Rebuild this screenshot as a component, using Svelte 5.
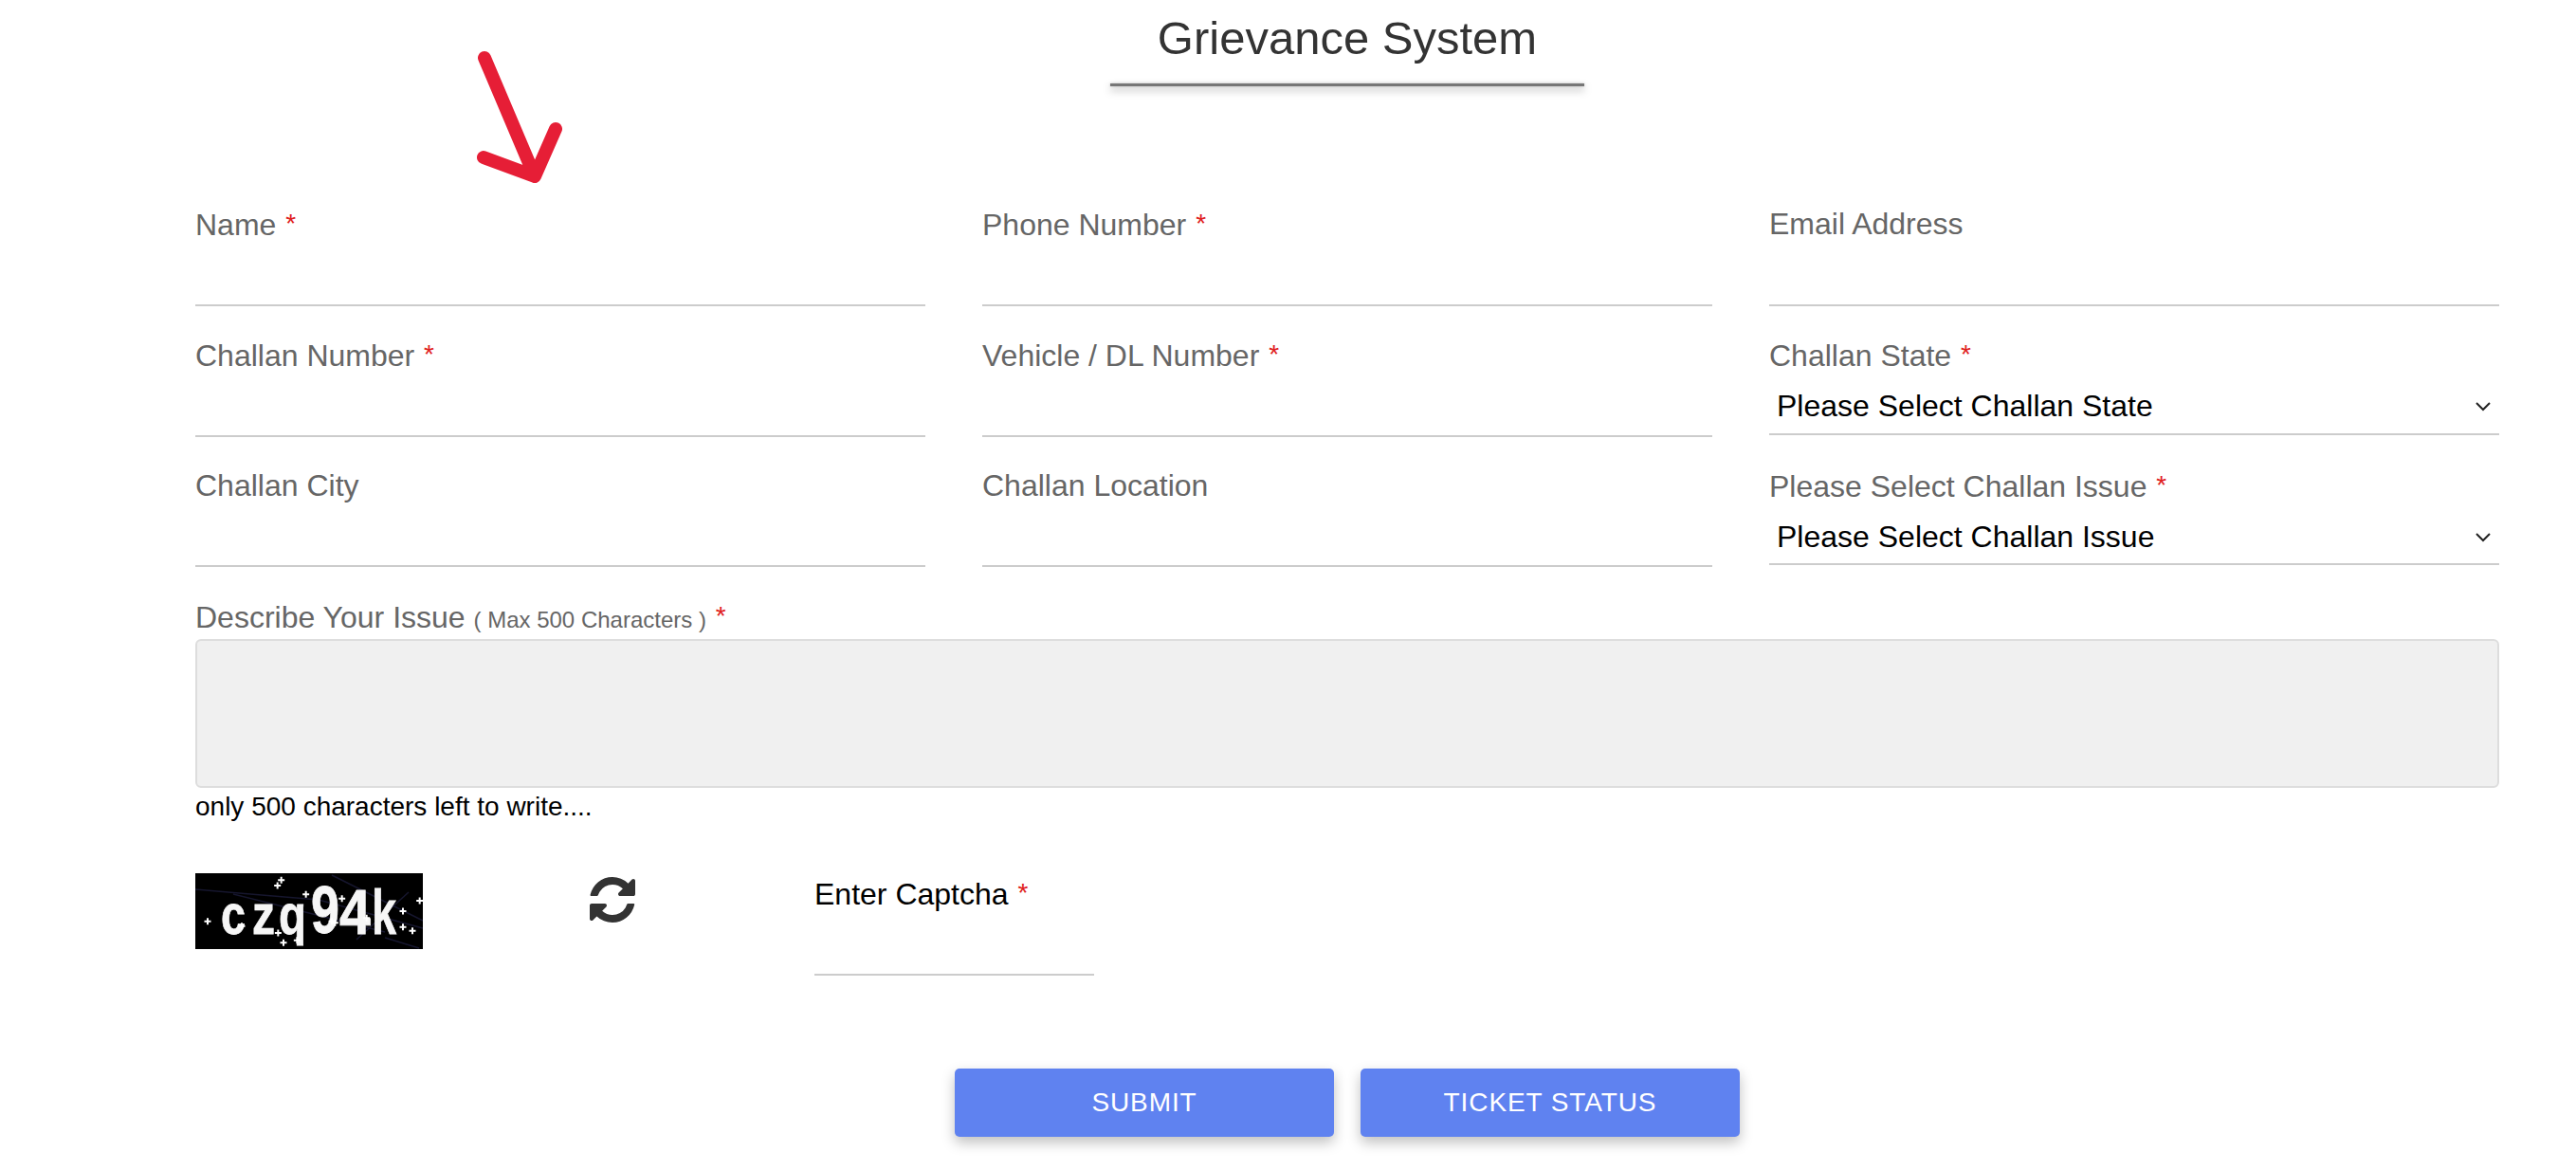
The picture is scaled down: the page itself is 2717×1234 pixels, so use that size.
<script>
  const rows = [
    [{ label: 'Name', req: true }, { label: 'Phone Number', req: true }, { label: 'Email Address', req: false }],
    [{ label: 'Challan Number', req: true }, { label: 'Vehicle / DL Number', req: true }, { label: 'Challan State', req: true, select: 'Please Select Challan State' }],
    [{ label: 'Challan City', req: false }, { label: 'Challan Location', req: false }, { label: 'Please Select Challan Issue', req: true, select: 'Please Select Challan Issue' }]
  ];
  const fields = rows.flat();
  const stars = [[350,85],[338,102],[428,130],[542,143],[788,150],[735,183],[117,215],[520,220],[620,205],[225,230],[340,252],[400,275],[357,283],[735,233],[765,245],[510,215]]
    .map(([x, y]) => [x / 3 - 26, y / 3 - 21]);
  const glyphs = [
    { c: 'c', x: 27, y: 64, s: 60, w: 26 },
    { c: 'z', x: 60, y: 64, s: 60, w: 24 },
    { c: 'q', x: 88, y: 64, s: 60, w: 29 },
    { c: '9', x: 122, y: 63, s: 70, w: 30 },
    { c: '4', x: 152, y: 64, s: 66, w: 33 },
    { c: 'k', x: 186, y: 64, s: 66, w: 26 }
  ];
</script>

<div class="page">
  <svg class="arrow" width="100" height="150" viewBox="0 0 100 150" aria-hidden="true">
    <path d="M12 8 L65 133 M11 113 L65 133 L87 83" fill="none" stroke="#e61e36" stroke-width="14" stroke-linecap="round" stroke-linejoin="round" />
  </svg>

  <header class="head">
    <h1>Grievance System</h1>
    <div class="rule"></div>
  </header>

  <form class="form" onsubmit={(e) => e.preventDefault()}>
    <div class="grid">
      {#each fields as f}
        <div class="field">
          <label class="lbl">{f.label}{#if f.req}&nbsp;<span class="req">*</span>{/if}</label>
          {#if f.select}
            <div class="selwrap">
              <select class="sel"><option>{f.select}</option></select>
              <svg class="chev" width="16" height="10" viewBox="0 0 16 10" aria-hidden="true">
                <path d="M1 1 L8 8 L15 1" fill="none" stroke="#222" stroke-width="2" />
              </svg>
            </div>
          {:else}
            <input class="inp" type="text" />
          {/if}
        </div>
      {/each}
    </div>

    <div class="issue">
      <label class="lbl">Describe Your Issue <small>( Max 500 Characters )</small>&nbsp;<span class="req">*</span></label>
      <textarea class="area"></textarea>
      <p class="left">only 500 characters left to write....</p>
    </div>

    <div class="captcha">
      <svg class="capimg" width="240" height="80" viewBox="0 0 240 80" role="img" aria-label="captcha">
        <rect width="240" height="80" fill="#000" />
        <g class="soft">
          <g stroke="#16162e" stroke-width="1.5" fill="none">
            <path d="M0 17 L130 28 L240 58" />
            <path d="M144 2 L240 50" />
            <path d="M170 70 L225 20" />
            <path d="M200 68 L236 79" />
            <path d="M40 22 L200 62" />
          </g>
          <g fill="#f6f6f6" stroke="#f6f6f6" stroke-width="0.8" font-family="'Liberation Sans', sans-serif" font-weight="700">
            {#each glyphs as g}
              <text x={g.x} y={g.y} font-size={g.s} textLength={g.w} lengthAdjust="spacingAndGlyphs">{g.c}</text>
            {/each}
          </g>
          <g fill="#fff">
            {#each stars as [x, y]}
              <path d="M{x - 3.500} {y - 1} h2.500 v-2.500 h2 v2.500 h2.500 v2 h-2.500 v2.500 h-2 v-2.500 h-2.500 z" />
            {/each}
          </g>
        </g>
      </svg>
      <svg class="refresh" width="56" height="56" viewBox="0 0 1792 1792" aria-hidden="true">
        <path fill="#333" d="M1639 1056q0 5-1 7-64 268-268 434.500t-478 166.500q-146 0-282.500-55t-243.500-157l-129 129q-19 19-45 19t-45-19-19-45v-448q0-26 19-45t45-19h448q26 0 45 19t19 45-19 45l-137 137q71 66 161 102t187 36q134 0 250-65t186-179q11-17 53-117 8-23 30-23h192q13 0 22.500 9.500t9.500 22.500zm25-800v448q0 26-19 45t-45 19h-448q-26 0-45-19t-19-45 19-45l138-138q-148-137-349-137-134 0-250 65t-186 179q-11 17-53 117-8 23-30 23h-199q-13 0-22.500-9.500t-9.500-22.500v-7q65-268 270-434.500t480-166.500q146 0 284 55.500t245 156.500l130-129q19-19 45-19t45 19 19 45z" />
      </svg>
      <div class="capfield">
        <label class="caplbl">Enter Captcha&nbsp;<span class="req">*</span></label>
        <input class="inp capinp" type="text" />
      </div>
    </div>

    <div class="actions">
      <button type="submit" class="btn">SUBMIT</button>
      <button type="button" class="btn">TICKET STATUS</button>
    </div>
  </form>
</div>

<style>
  :global(body) {
    margin: 0;
    background: #fff;
  }
  .page {
    position: relative;
    width: 2717px;
    height: 1234px;
    overflow: hidden;
    font-family: 'Liberation Sans', Arial, sans-serif;
  }
  .arrow {
    position: absolute;
    left: 499px;
    top: 53px;
  }
  .head {
    box-sizing: border-box;
    height: 218.4px;
    padding: 0 81px 0 206px;
    display: flex;
    flex-direction: column;
    align-items: center;
  }
  h1 {
    margin: 13px 0 0;
    height: 54px;
    line-height: 54px;
    font-size: 49px;
    font-weight: 400;
    color: #333;
  }
  .rule {
    width: 500px;
    height: 3px;
    margin-top: 21px;
    background: #777;
    box-shadow: 0 4px 9px rgba(0, 0, 0, 0.35), 0 0 3px rgba(0, 0, 0, 0.2);
  }
  .form {
    padding: 0 81px 0 206px;
  }
  .grid {
    display: grid;
    grid-template-columns: repeat(3, 770px);
    column-gap: 60px;
    row-gap: 33px;
  }
  .field {
    display: flex;
    flex-direction: column;
    height: 104.6px;
  }
  .lbl {
    display: block;
    height: 36px;
    line-height: 36px;
    font-size: 32px;
    color: #666;
  }
  .lbl small {
    font-size: 24px;
  }
  .req {
    margin-left: 1px;
    color: #e02020;
    font-size: 28px;
    vertical-align: 3px;
  }
  .inp {
    display: block;
    box-sizing: border-box;
    width: 100%;
    height: 68.600px;
    padding: 0;
    border: 0;
    border-bottom: 2px solid #ccc;
    outline: none;
    background: transparent;
  }
  .selwrap {
    position: relative;
  }
  .chev {
    position: absolute;
    right: 9px;
    top: 32px;
    pointer-events: none;
  }
  .sel {
    appearance: none;
    display: block;
    box-sizing: border-box;
    width: 100%;
    height: 66.600px;
    margin: 0;
    padding: 8px 0 0 8px;
    border: 0;
    border-bottom: 2px solid #ccc;
    border-radius: 0;
    outline: none;
    background: #fff;
    color: #000;
    font-family: inherit;
    font-size: 32px;
  }
  .issue {
    margin-top: 33.8px;
  }
  .area {
    display: block;
    box-sizing: border-box;
    width: 100%;
    height: 157px;
    margin: 6px 0 0;
    border: 2px solid #ddd;
    border-radius: 6px;
    background: #f0f0f0;
    outline: none;
    resize: none;
  }
  .left {
    margin: 4px 0 0;
    height: 32px;
    line-height: 32px;
    font-size: 28px;
    color: #000;
  }
  .captcha {
    display: flex;
    align-items: flex-start;
    margin-top: 54px;
  }
  .capimg {
    display: block;
    flex: none;
  }
  .soft {
    filter: blur(0.6px);
  }
  .refresh {
    display: block;
    flex: none;
    margin: 0 0 0 172px;
  }
  .capfield {
    width: 295px;
    margin: 3px 0 0 185px;
  }
  .caplbl {
    display: block;
    height: 36px;
    line-height: 36px;
    font-size: 32px;
    color: #000;
  }
  .capinp {
    height: 69px;
  }
  .actions {
    display: flex;
    gap: 28px;
    margin: 98px 0 0 801px;
  }
  .btn {
    width: 400px;
    height: 72px;
    padding: 0;
    border: 0;
    border-radius: 5px;
    background: #5f82f0;
    color: #fff;
    font-family: inherit;
    font-size: 28px;
    letter-spacing: 0.9px;
    box-shadow: 0 6px 14px rgba(0, 0, 0, 0.25);
  }
</style>
